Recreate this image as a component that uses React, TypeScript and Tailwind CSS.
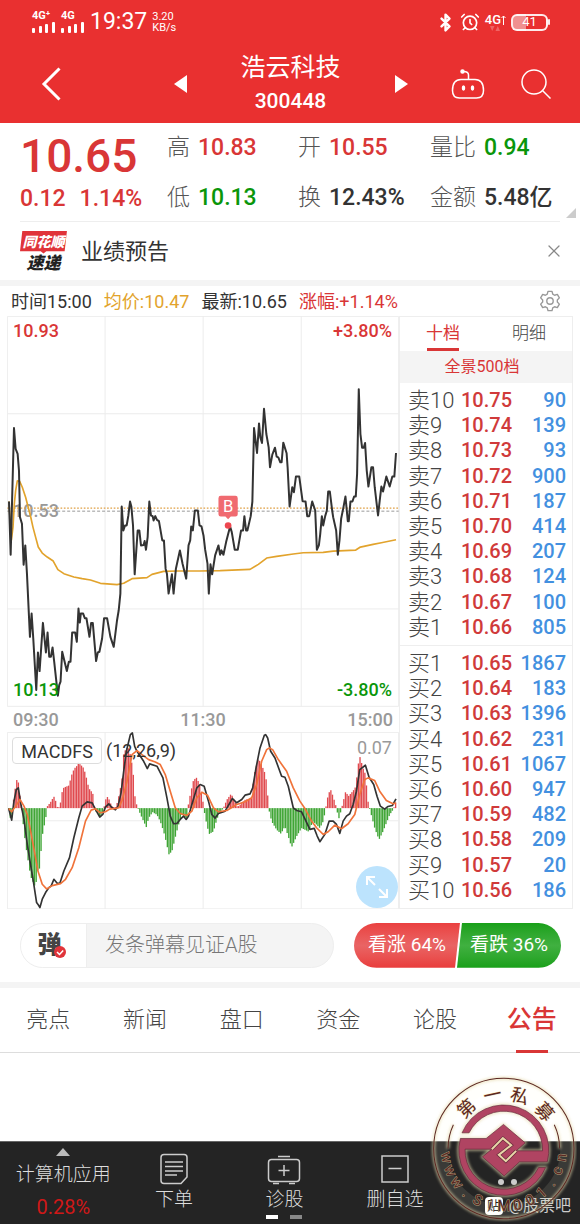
import { Bluetooth, AlarmClock, X } from "lucide-react";

const font = 'font-[Roboto,"Noto_Sans_CJK_SC",sans-serif]';

const sells = [
  ["卖10", "10.75", "90"],
  ["卖9", "10.74", "139"],
  ["卖8", "10.73", "93"],
  ["卖7", "10.72", "900"],
  ["卖6", "10.71", "187"],
  ["卖5", "10.70", "414"],
  ["卖4", "10.69", "207"],
  ["卖3", "10.68", "124"],
  ["卖2", "10.67", "100"],
  ["卖1", "10.66", "805"],
];

const buys = [
  ["买1", "10.65", "1867"],
  ["买2", "10.64", "183"],
  ["买3", "10.63", "1396"],
  ["买4", "10.62", "231"],
  ["买5", "10.61", "1067"],
  ["买6", "10.60", "947"],
  ["买7", "10.59", "482"],
  ["买8", "10.58", "209"],
  ["买9", "10.57", "20"],
  ["买10", "10.56", "186"],
];

const stats = [
  { label: "高", value: "10.83", color: "text-[#d93636]" },
  { label: "开", value: "10.55", color: "text-[#d93636]" },
  { label: "量比", value: "0.94", color: "text-[#0a960a]" },
  { label: "低", value: "10.13", color: "text-[#0a960a]" },
  { label: "换", value: "12.43%", color: "text-[#333]" },
  { label: "金额", value: "5.48亿", color: "text-[#333]" },
];

const tabs = ["亮点", "新闻", "盘口", "资金", "论股", "公告"];

const priceLine =
  "25,573 30,733 40,352 45,415 51,430 55,480 58,620 64,640 69,763 74,705 79,790 88,980 93,910 98,985 107,1140 112,1027 117,1083 127,938 136,1027 141,967 146,1040 151,1040 156,1012 161,1055 172,1157 176,1125 180,1115 185,1025 199,1083 205,1055 210,1055 215,967 224,967 229,995 234,895 238,937 241,910 248,910 253,924 258,924 267,980 272,938 277,938 287,1053 292,1027 297,1025 305,985 311,924 320,924 330,980 340,1010 350,930 355,900 360,850 364,588 369,660 374,645 379,645 384,615 389,573 393,588 398,645 403,792 412,660 417,660 422,705 430,704 433,692 437,718 442,680 447,573 452,615 457,617 460,630 465,617 470,628 476,632 486,690 491,690 496,775 500,790 505,850 515,792 520,850 527,775 539,720 547,760 558,805 565,705 570,690 573,648 578,660 584,600 593,600 598,645 604,648 610,675 615,718 622,760 626,850 631,762 636,792 645,735 655,705 660,733 664,720 670,733 678,695 690,648 695,665 704,718 713,718 723,660 729,660 733,617 738,660 742,660 752,617 757,573 762,352 771,427 777,338 781,380 786,397 792,294 799,370 806,410 810,470 817,432 825,411 830,438 835,440 841,455 845,455 850,396 860,428 863,470 869,588 877,530 882,545 888,498 898,498 908,572 917,573 922,617 928,617 937,573 946,600 951,718 957,705 961,672 966,617 970,645 976,617 981,600 985,543 990,543 997,600 1000,620 1009,660 1014,733 1019,690 1024,625 1030,595 1037,558 1044,632 1047,632 1052,573 1058,573 1063,558 1068,558 1072,490 1077,235 1082,370 1087,411 1092,411 1096,397 1101,480 1106,528 1115,470 1120,470 1125,530 1135,615 1140,570 1145,528 1150,543 1160,498 1170,528 1178,498 1184,498 1189,427";

const averageLine =
  "25,573 32,690 37,650 41,580 45,540 50,511 57,512 65,530 75,560 84,595 90,618 97,650 105,680 113,710 125,728 140,740 158,752 172,778 190,790 220,800 245,805 270,809 300,819 350,823 370,819 395,805 440,802 455,792 490,783 530,782 598,782 660,781 750,777 775,762 800,743 830,738 880,731 910,727 970,726 1000,722 1068,719 1082,710 1120,702 1145,697 1189,688";

const difLine =
  "24,252 33,287 40,230 47,195 53,190 60,235 70,285 80,360 88,410 98,470 108,535 114,543 118,550 125,525 135,505 145,490 152,485 160,465 170,477 178,477 190,440 207,400 220,340 235,280 245,245 260,232 275,235 285,255 298,278 307,270 315,248 325,238 335,250 345,256 353,245 362,205 370,140 378,80 390,30 396,25 403,65 410,80 430,110 441,132 448,118 470,125 488,160 500,220 510,275 520,298 530,297 540,285 550,275 558,285 565,275 575,240 590,190 600,180 612,185 625,230 635,270 645,281 655,267 675,260 697,222 710,235 725,225 735,212 750,208 758,190 768,130 780,70 793,32 797,30 803,40 812,80 825,100 845,155 855,158 865,185 880,250 890,258 905,262 930,315 943,312 952,335 960,352 975,330 988,290 1000,290 1010,300 1020,327 1030,290 1040,275 1050,268 1060,240 1070,200 1080,135 1097,122 1108,158 1122,180 1132,215 1142,245 1155,254 1165,246 1178,243 1189,223";

const deaLine =
  "24,252 33,262 45,245 58,225 70,245 80,270 90,320 102,385 112,440 125,480 138,494 155,484 180,478 195,465 215,430 235,370 255,290 272,257 285,253 300,265 315,262 328,254 345,252 355,250 365,228 380,170 395,90 410,78 425,90 445,105 465,112 480,120 495,150 510,200 525,250 540,267 560,273 575,260 590,220 605,203 622,212 640,250 655,262 680,258 710,240 735,232 755,220 770,180 785,110 800,75 808,70 818,75 835,105 860,140 880,190 900,230 915,252 935,290 950,310 970,330 985,322 1005,302 1025,313 1045,298 1065,270 1080,210 1095,165 1105,160 1125,168 1140,200 1160,228 1180,238 1189,236";

// [x, height] pairs, bars are interpolated between them
const macdShape = [
  [23, 0], [26, -12], [32, -48], [36, -2], [40, 40], [49, 88], [54, 75], [60, 20], [64, -15], [75, -110],
  [90, -205], [105, -240], [110, -190], [118, -180], [122, -120], [127, -70], [135, -35], [140, 5], [150, 18],
  [160, 35], [166, 20], [171, 0], [178, 5], [185, 50], [190, 62], [205, 68], [215, 105], [222, 120], [228, 125],
  [233, 137], [243, 128], [250, 120], [257, 95], [265, 60], [277, 45], [281, 10], [285, -8], [300, -28],
  [308, -8], [312, 8], [317, 30], [323, 35], [328, 20], [335, 5], [345, 2], [352, 20], [360, 60], [365, 90],
  [370, 165], [378, 180], [385, 180], [390, 160], [398, 115], [403, 40], [410, 5], [415, -5], [420, -18],
  [430, -40], [438, -57], [445, -30], [457, -12], [470, -20], [480, -40], [490, -70], [500, -110], [505, -140],
  [515, -130], [520, -110], [527, -80], [535, -50], [545, -20], [560, -30], [564, 8], [570, 40], [580, 85],
  [590, 92], [598, 70], [607, 30], [612, -8], [620, -50], [627, -78], [640, -70], [647, -45], [655, -20],
  [667, -4], [672, 5], [680, 25], [693, 43], [700, 30], [712, 3], [720, 10], [735, 25], [755, 30], [762, 100],
  [775, 150], [785, 130], [797, 100], [803, 40], [808, -10], [815, -40], [830, -65], [843, -77], [855, -55],
  [865, -85], [875, -118], [890, -85], [905, -60], [925, -70], [940, -40], [960, -60], [970, -40], [977, -5],
  [980, 15], [985, 40], [992, 57], [1000, 35], [1008, 8], [1013, -15], [1018, -32], [1023, -10], [1028, 10],
  [1038, 52], [1045, 35], [1060, 52], [1068, 65], [1073, 110], [1079, 160], [1090, 120], [1098, 100],
  [1103, 30], [1108, 5], [1112, -10], [1125, -60], [1138, -95], [1150, -70], [1160, -45], [1170, -20],
  [1180, -5], [1186, 10], [1191, 28],
];

function macdAt(x: number) {
  for (let i = 1; i < macdShape.length; i++) {
    const [x1, y1] = macdShape[i];
    if (x <= x1) {
      const [x0, y0] = macdShape[i - 1];
      return y0 + ((y1 - y0) * (x - x0)) / (x1 - x0);
    }
  }
  return 0;
}

const macdBars = Array.from({ length: 240 }, (_, i) => {
  const x = 24 + i * 4.87;
  return { x, value: macdAt(x) };
});

function Signal({ label }: { label: string }) {
  return (
    <div className="flex h-[22px] flex-col justify-between">
      <span className="text-[11px] leading-[10px] font-bold">{label}</span>
      <svg viewBox="0 0 24 11" className="h-[11px] w-6" fill="currentColor">
        <rect x="0" y="6" width="3" height="5" rx="1" />
        <rect x="7" y="4" width="3" height="7" rx="1" />
        <rect x="13" y="2" width="3" height="9" rx="1" />
        <rect x="20" y="0" width="3" height="11" rx="1" />
      </svg>
    </div>
  );
}

function Header() {
  return (
    <header className="h-[123px] bg-[#e93030] text-white">
      <div className="flex h-11 items-center justify-between px-8">
        <div className="flex items-center gap-[5px]">
          <Signal label="4G⁺" />
          <Signal label="4G" />
          <span className="text-[23px]">19:37</span>
          <span className="text-[11px] leading-[11px]">
            3.20
            <br />
            KB/s
          </span>
        </div>
        <div className="flex items-center gap-[5px]">
          <Bluetooth size={19} strokeWidth={3} />
          <AlarmClock size={20} strokeWidth={2} />
          <div className="flex flex-col items-center">
            <span className="flex items-center text-[13px] leading-[13px] font-medium">
              4G
              <svg viewBox="0 0 5 10" className="h-[10px] w-[5px]" fill="none" stroke="currentColor">
                <path d="M2.500 10V1M.5 3l2-2 2 2" />
              </svg>
            </span>
            <svg viewBox="0 0 10 5" className="h-[5px] w-[10px] fill-[#f06464]">
              <path d="M0 0h4.500L2.200 5zM5.500 5h4.500L7.800 0z" />
            </svg>
          </div>
          <div className="relative flex h-[17px] w-[37px] items-center justify-center rounded-md border-2 border-white/90 bg-linear-to-r from-[#f09090] from-40% to-transparent to-40% text-[13px]">
            41
            <span className="absolute -right-1 h-1.5 w-0.5 rounded bg-white/90" />
          </div>
        </div>
      </div>
      <nav className="flex items-center justify-between pr-[29px] pl-9">
        <button aria-label="返回" className="flex h-20 w-[30px] items-center justify-center">
          <svg viewBox="0 0 20 34" className="h-[34px] w-5" fill="none" stroke="currentColor" strokeWidth="3">
            <path d="M18.500 1.500 3 17l15.500 15.500" />
          </svg>
        </button>
        <div className="flex items-center pl-16">
          <button aria-label="上一只" className="p-2">
            <svg viewBox="0 0 13 18" className="h-[18px] w-[13px]" fill="currentColor">
              <path d="M13 0v18L0 9z" />
            </svg>
          </button>
          <div className="flex w-[192px] flex-col items-center">
            <h1 className="text-[25px] leading-[34px]">浩云科技</h1>
            <span className="text-[21px] leading-8 font-medium">300448</span>
          </div>
          <button aria-label="下一只" className="p-2">
            <svg viewBox="0 0 13 18" className="h-[18px] w-[13px]" fill="currentColor">
              <path d="M0 0v18l13-9z" />
            </svg>
          </button>
        </div>
        <div className="flex items-center gap-9">
          <button aria-label="智能助手">
            <svg viewBox="0 0 34 32" className="h-8 w-[34px]" fill="none" stroke="currentColor" strokeWidth="1.500">
              <path d="M10 11.500h14c6 0 8.500 5 8.500 11 0 6-3 7.500-7 7.500H8.500c-4 0-7-1.500-7-7.500 0-6 2.500-11 8.500-11zM17.500 11.500V7c0-2-2-3.500-5-3.500" />
              <circle cx="11.500" cy="3.500" r="1.500" fill="currentColor" />
              <ellipse cx="12.500" cy="20" rx="1" ry="2" fill="currentColor" />
              <ellipse cx="21.500" cy="20" rx="1" ry="2" fill="currentColor" />
            </svg>
          </button>
          <button aria-label="搜索">
            <svg viewBox="0 0 30 30" className="size-[30px]" fill="none" stroke="currentColor" strokeWidth="1.500">
              <circle cx="13" cy="13" r="12" />
              <path d="m21.500 21.500 8 8" />
            </svg>
          </button>
        </div>
      </nav>
    </header>
  );
}

function Quote() {
  return (
    <section className="relative flex h-[99px] pl-5">
      <div className="w-[147px] text-[#d93636]">
        <div className="pt-1 text-[46px] leading-[58px] font-medium">10.65</div>
        <div className="flex gap-[14px] text-[23px] leading-7 font-medium">
          <span>0.12</span>
          <span>1.14%</span>
        </div>
      </div>
      <dl className="grid flex-1 grid-cols-[131px_132px_1fr] grid-rows-[50px_51px] text-[23px]">
        {stats.map((s) => (
          <div key={s.label} className="flex items-center gap-2">
            <dt className="font-light text-[#555]">{s.label}</dt>
            <dd className={"text-[23px] font-medium whitespace-nowrap " + s.color}>{s.value}</dd>
          </div>
        ))}
      </dl>
      <svg viewBox="0 0 10 10" className="absolute right-1 bottom-1 size-[10px] fill-[#ccc]">
        <path d="M10 0v10H0z" />
      </svg>
    </section>
  );
}

function Notice() {
  return (
    <section className="flex h-[58px] items-center pr-4 pl-5">
      <div className="flex flex-col items-center font-black italic">
        <span className="flex h-[23px] w-[47px] items-center justify-center bg-[#e0343a] text-[14px] leading-none text-white [clip-path:polygon(5%_0,100%_0,95%_90%,56%_90%,50%_100%,44%_90%,0_90%)]">
          同花顺
        </span>
        <span className="text-[17px] leading-[18px] text-[#222]">速递</span>
      </div>
      <a href="#notice" className="ml-[14px] flex-1 text-[22px] text-[#333]">
        业绩预告
      </a>
      <button aria-label="关闭" className="text-[#888]">
        <X size={20} strokeWidth={1.5} />
      </button>
    </section>
  );
}

function PriceChart() {
  return (
    <div className="relative text-[18px] leading-6 font-medium">
      <span className="absolute top-[3px] left-1.5 text-[#d93636]">10.93</span>
      <span className="absolute top-[3px] right-[7px] text-[#d93636]">+3.80%</span>
      <span className="absolute top-1/2 left-1.5 -translate-y-1/2 text-[#999]">10.53</span>
      <svg viewBox="19 15 1179 1175" className="relative block w-full" fill="none">
        <path d="M20 16H1197V1189H20zM314 16V1189M609 16V1189M904 16V1189M20 309H1197M20 896H1197" stroke="#ececec" strokeWidth="3" />
        <path d="M20 602H1197" stroke="#999" strokeWidth="3" strokeDasharray="9 6" />
        <path d="M20 593H1197" stroke="#dfa045" strokeWidth="4" strokeDasharray="5 5" />
        <polyline points={averageLine} stroke="#e2a32c" strokeWidth="5" strokeLinejoin="round" />
        <polyline points={priceLine} stroke="#333" strokeWidth="6" strokeLinejoin="round" />
        <path d="M662 556h44q7 0 7 7v48q0 7-7 7h-14l-8 8-8-8h-14q-7 0-7-7v-48q0-7 7-7z" fill="#f06a70" />
        <circle cx="684" cy="645" r="10" fill="#ee4750" />
        <text x="684" y="605" textAnchor="middle" fontSize="50" fontWeight="400" fill="#fff">
          B
        </text>
      </svg>
      <span className="absolute bottom-[5px] left-1.5 text-[#0a960a]">10.13</span>
      <span className="absolute right-[7px] bottom-[5px] text-[#0a960a]">-3.80%</span>
    </div>
  );
}

function MacdChart() {
  return (
    <div className="relative text-[18px]">
      <svg viewBox="19 22 1179 533" className="block w-full" fill="none">
        <path d="M20 23H1197V554H20zM314 23V554M609 23V554M904 23V554M20 289H1197" stroke="#ececec" strokeWidth="3" />
        {macdBars.map((b) => (
          <rect
            key={b.x}
            x={b.x - 2}
            y={b.value > 0 ? 251 - b.value : 251}
            width="4"
            height={Math.abs(b.value)}
            fill={b.value > 0 ? "#e04a4f" : "#3fa535"}
          />
        ))}
        <polyline points={difLine} stroke="#333" strokeWidth="5" strokeLinejoin="round" />
        <polyline points={deaLine} stroke="#f0733a" strokeWidth="5" strokeLinejoin="round" />
      </svg>
      <div className="absolute top-[5px] left-[5px] flex items-center gap-1 text-[#333]">
        <button className="h-[27px] w-[90px] rounded border border-[#ddd] bg-white/80">MACDFS</button>
        <span>(12,26,9)</span>
      </div>
      <span className="absolute top-0.5 right-[7px] text-[#999]">0.07</span>
      <button aria-label="全屏" className="absolute right-px bottom-px flex size-[42px] items-center justify-center rounded-full bg-[#bce3fd]">
        <svg viewBox="0 0 24 24" className="size-6" fill="none" stroke="#fff" strokeWidth="2">
          <path d="M2 10V2h8M2 2l8 8M22 14v8h-8M22 22l-8-8" />
        </svg>
      </button>
    </div>
  );
}

function OrderTable({ label, rows }: { label: string; rows: string[][] }) {
  return (
    <table aria-label={label} className="h-[252px] w-full">
      <tbody>
        {rows.map(([name, price, volume]) => (
          <tr key={name} className="text-[20px] leading-[25px]">
            <th scope="row" className="w-[53px] p-0 text-left text-[22px] font-light whitespace-nowrap text-[#444]">
              {name}
            </th>
            <td className="p-0 font-medium text-[#d03a3a]">{price}</td>
            <td className="p-0 text-right font-medium text-[#4390e0]">{volume}</td>
          </tr>
        ))}
      </tbody>
    </table>
  );
}

function OrderBook() {
  return (
    <aside className="flex w-[174px] shrink-0 flex-col border border-[#eee]">
      <div className="grid h-[34px] grid-cols-2 text-[17px]">
        <button className="relative text-[#d93636]">
          十档
          <span className="absolute bottom-0 left-1/2 h-[3px] w-8 -translate-x-1/2 bg-[#d93636]" />
        </button>
        <button className="font-light text-[#444]">明细</button>
      </div>
      <button className="h-8 bg-[#f4f4f4] pr-2 text-[16px] text-[#d93636]">全景500档</button>
      <div className="flex flex-1 items-center border-b border-[#eee] pr-1.5 pl-2">
        <OrderTable label="卖盘" rows={sells} />
      </div>
      <div className="flex flex-1 items-center pr-1.5 pl-2">
        <OrderTable label="买盘" rows={buys} />
      </div>
    </aside>
  );
}

function Market() {
  return (
    <section className="px-[7px]">
      <div className="flex h-[30px] items-center gap-3 pr-3 pl-1 text-[18px] text-[#333]">
        <span>时间15:00</span>
        <span className="text-[#e2a32c]">均价:10.47</span>
        <span>最新:10.65</span>
        <span className="text-[#d93636]">涨幅:+1.14%</span>
        <button aria-label="设置" className="ml-auto">
          <svg viewBox="0 0 24 24" className="size-[22px]" fill="none" stroke="#999" strokeWidth="1.500" strokeLinejoin="round">
            <path d="M9.800 1.500h4.400l.8 3 2 1.200 3-.9 2.200 3.800-2.200 2.200v2.400l2.200 2.200-2.200 3.800-3-.9-2 1.200-.8 3H9.800l-.8-3-2-1.200-3 .9-2.200-3.800L4 13.200v-2.400L1.800 8.600 4 4.800l3 .9 2-1.200z" />
            <circle cx="12" cy="12" r="3.500" />
          </svg>
        </button>
      </div>
      <div className="flex">
        <div className="min-w-0 flex-1">
          <PriceChart />
          <div className="flex h-[25px] items-center justify-between px-1.5 text-[18px] font-medium text-[#999]">
            <span>09:30</span>
            <span>11:30</span>
            <span>15:00</span>
          </div>
          <MacdChart />
        </div>
        <OrderBook />
      </div>
    </section>
  );
}

function Comment() {
  return (
    <section className="flex h-[73px] items-center gap-5 pr-[19px] pl-5">
      <div className="flex h-[45px] min-w-0 flex-1 overflow-hidden rounded-full border border-[#eee] bg-[#f4f4f4]">
        <button className="relative w-[66px] shrink-0 border-r border-[#eee] bg-white pr-2 text-[24px] leading-none font-black text-[#444]">
          弹
          <svg viewBox="0 0 12 12" className="absolute right-5 bottom-[9px] size-3" fill="none">
            <circle cx="6" cy="6" r="6" fill="#e0343a" />
            <path d="m3 6 2.500 2.500L9.200 4.500" stroke="#fff" strokeWidth="1.500" />
          </svg>
        </button>
        <input
          aria-label="发弹幕"
          placeholder="发条弹幕见证A股"
          className="min-w-0 flex-1 bg-transparent pl-[18px] text-[20px] font-light placeholder:text-[#777]"
        />
      </div>
      <div className="flex h-[45px] overflow-hidden rounded-full text-[19px] whitespace-nowrap text-white">
        <button className="w-[106px] bg-linear-to-b from-[#ea4040] via-[#e96464] to-[#e93c3c] [clip-path:polygon(0_0,100%_0,calc(100%-5px)_100%,0_100%)]">
          看涨 64%
        </button>
        <button className="-ml-[3px] w-[104px] bg-linear-to-b from-[#18a018] via-[#40b040] to-[#18a018] [clip-path:polygon(5px_0,100%_0,100%_100%,0_100%)]">
          看跌 36%
        </button>
      </div>
    </section>
  );
}

function Tabs() {
  return (
    <nav className="grid h-[65px] grid-cols-6 border-b border-[#ddd] text-[22px]">
      {tabs.map((t) =>
        t === "公告" ? (
          <button key={t} aria-current="page" className="relative text-[25px] font-medium text-[#d93636]">
            {t}
            <span className="absolute -bottom-px left-1/2 h-[3px] w-8 -translate-x-1/2 bg-[#d93636]" />
          </button>
        ) : (
          <button key={t} className="font-light text-[#444]">
            {t}
          </button>
        )
      )}
    </nav>
  );
}

function BottomBar() {
  return (
    <footer className="grid h-[83px] grid-cols-5 border-t border-[#666] bg-[#242424] pr-[19px] pl-2 text-[19px] leading-[22px] font-light text-[#ddd]">
      <button className="flex flex-col items-center pt-1.5 whitespace-nowrap">
        <svg viewBox="0 0 14 8" className="h-2 w-[14px] fill-[#bbb]">
          <path d="M7 0l7 8H0z" />
        </svg>
        <span className="mt-2">计算机应用</span>
        <span className="mt-2.5 text-[20px] font-normal text-[#d01818]">0.28%</span>
      </button>
      <button className="flex flex-col items-center gap-1 pt-[11px]">
        <svg viewBox="0 0 28 32" className="h-8 w-7" fill="none" stroke="#ccc" strokeWidth="1.500">
          <path d="M4 1.500h20q3 0 3 3V24l-6 6.500H4q-3 0-3-3v-23q0-3 3-3zM5 9h18M5 13.500h18M5 18h18M5 22h12" />
        </svg>
        下单
      </button>
      <button className="flex flex-col items-center gap-1 pt-[11px]">
        <svg viewBox="0 0 34 32" className="h-8 w-[34px]" fill="none" stroke="#ccc" strokeWidth="1.500">
          <path d="M11 3.500h12" />
          <rect x="1.500" y="6.500" width="31" height="22" rx="3" />
          <path d="M17 12v11M11.500 17.500h11M6 30.500h6M22 30.500h6" />
        </svg>
        诊股
        <span className="flex gap-3">
          <i className="h-1 w-3 bg-white" />
          <i className="h-1 w-3 bg-[#888]" />
        </span>
      </button>
      <button className="flex flex-col items-center gap-1 pt-[11px]">
        <svg viewBox="0 0 28 32" className="h-8 w-7" fill="none" stroke="#ccc" strokeWidth="1.500">
          <path d="M1 3h26v26H1zM7.500 15.500h13" />
        </svg>
        删自选
      </button>
      <button aria-label="更多" className="flex justify-center gap-[7px] pt-[37px] pl-1">
        <i className="size-1.5 rounded-full bg-[#ccc]" />
        <i className="size-1.5 rounded-full bg-[#ccc]" />
      </button>
    </footer>
  );
}

const ring = [
  { char: "第", angle: -43 },
  { char: "一", angle: -12 },
  { char: "私", angle: 17 },
  { char: "募", angle: 48 },
];

function Stamp() {
  return (
    <div className="pointer-events-none absolute right-[3px] bottom-0.5 w-[147px]">
      <div className="absolute right-1.5 bottom-1 flex items-center gap-1.5 text-[16px] leading-6 whitespace-nowrap text-[#ccc]">
        <span className="flex size-[18px] items-center justify-center rounded-sm bg-white text-[13px] leading-none text-[#222]">贴</span>
        @股票吧
      </div>
      <svg viewBox="60 45 440 440" className="relative block w-full" fill="none">
        <defs>
          <filter id="glow" x="-10%" y="-10%" width="120%" height="120%">
            <feGaussianBlur stdDeviation="4" />
          </filter>
        </defs>
        <circle cx="281" cy="265" r="190" stroke="#fffbe0" strokeWidth="42" opacity="0.1" />
        <g stroke="#e8dcb0" strokeWidth="8" filter="url(#glow)" opacity="0.8">
          <circle cx="281" cy="265" r="210" />
          <path d="M114 265A167 167 0 0 1 130 194M432 194A167 167 0 0 1 448 265" />
          <path d="M156 218A135 135 0 0 1 411 305H328L282 347L217 290L245 267H165A116 116 0 0 0 385 322H406A135 135 0 0 1 151 235H228L280 193L345 248L318 272H397A116 116 0 0 0 177 218z" />
        </g>
        <circle cx="281" cy="265" r="210" stroke="#5c2722" strokeWidth="3" />
        <path d="M114 265A167 167 0 0 1 130 194M432 194A167 167 0 0 1 448 265" stroke="#5c2722" strokeWidth="3" />
        <path
          d="M156 218A135 135 0 0 1 411 305H328L282 347L217 290L245 267H165A116 116 0 0 0 385 322H406A135 135 0 0 1 151 235H228L280 193L345 248L318 272H397A116 116 0 0 0 177 218z"
          fill="#b04462"
          stroke="#64283a"
          strokeWidth="2"
        />
        <path d="M245 267L278 234L303 255L266 284L287 303L318 272" stroke="#64283a" strokeWidth="10" />
        <path d="M245 267L278 234L303 255L266 284L287 303L318 272" stroke="#e8d6a8" strokeWidth="6" />
        <g textAnchor="middle" fill="#5c2722" strokeWidth="3" paintOrder="stroke">
          {ring.map((r) => (
            <text key={r.char} x="281" y="120" fontSize="54" stroke="#f6ecc8" transform={`rotate(${r.angle} 281 265)`}>
              {r.char}
            </text>
          ))}
          {"www.SiM001.cn".split("").map((char, i) => (
            <text key={i} x="281" y="453" fontSize="44" stroke="#a89a76" transform={`rotate(${81 - i * 13.5} 281 265)`}>
              {char}
            </text>
          ))}
        </g>
      </svg>
    </div>
  );
}

export default function App() {
  return (
    <div className={"relative overflow-hidden bg-white " + font}>
      <Header />
      <Quote />
      <div className="mr-5 ml-5 -mt-px h-px bg-[#eee]" />
      <Notice />
      <div className="h-[6px] bg-[#f4f4f4]" />
      <Market />
      <Comment />
      <div className="h-[6px] bg-[#f4f4f4]" />
      <Tabs />
      <main className="h-[88px]" />
      <BottomBar />
      <Stamp />
    </div>
  );
}
